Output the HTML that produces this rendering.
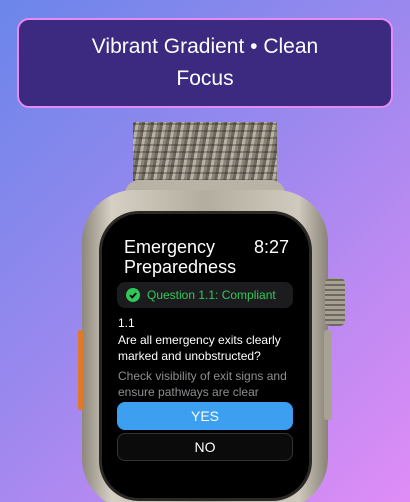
<!DOCTYPE html><html><head><style>
*{margin:0;padding:0;box-sizing:border-box}
html,body{width:410px;height:502px;overflow:hidden}
body{position:relative;font-family:"Liberation Sans",sans-serif;background:linear-gradient(135deg,#6b86ea 0%,#9a88ee 45%,#e08cf6 100%)}
.hdr{position:absolute;left:17px;top:18px;width:376px;height:90px;background:#3b2a80;border:2px solid #e58cf2;border-radius:12px;color:#fff;font-size:21px;text-align:center;line-height:32px;padding-top:11px}
.band{position:absolute;left:133px;top:122px;width:144px;height:80px;background:repeating-linear-gradient(100deg,#6d665c 0 3px,#b8b1a4 3px 6px,#8a8377 6px 9px);border-radius:2px}
.band:after{content:"";position:absolute;inset:0;background:repeating-linear-gradient(0deg,rgba(0,0,0,.25) 0 2px,transparent 2px 7px)}
.case{position:absolute;left:82px;top:190px;width:246px;height:320px;border-radius:52px;background:linear-gradient(90deg,#8d877c,#d6d0c4 12%,#b3ad9f 50%,#d0cabe 88%,#8a8478)}
.lug{position:absolute;top:180px;width:160px;height:30px;left:125px;background:#b9b3a6;border-radius:14px 14px 0 0}
.crown{position:absolute;left:325px;top:278px;width:20px;height:48px;border-radius:5px;background:repeating-linear-gradient(0deg,#6e685f 0 2px,#a7a194 2px 5px)}
.btn2{position:absolute;left:324px;top:330px;width:8px;height:90px;background:#a8a295;border-radius:3px}
.orange{position:absolute;left:78px;top:330px;width:5px;height:80px;background:#e07a2a;border-radius:2px}
.screen{position:absolute;left:99px;top:211px;width:213px;height:290px;border-radius:40px;background:#000;border:3px solid #2a2926}
.t{position:absolute;color:#fff;white-space:nowrap}
</style></head><body>
<div class="hdr">Vibrant Gradient • Clean<br>Focus</div>
<div class="band"></div>
<div class="lug"></div>
<div class="case"></div>
<div class="orange"></div>
<div class="crown"></div>
<div class="btn2"></div>
<div class="screen"></div>
<div class="t" style="left:124px;top:237px;font-size:18px;line-height:20px">Emergency<br>Preparedness</div>
<div class="t" style="left:254px;top:237px;font-size:18px;line-height:20px">8:27</div>
<div style="position:absolute;left:117px;top:282px;width:176px;height:26px;background:#1c1c1e;border-radius:8px"></div>
<div style="position:absolute;left:126px;top:288px;width:14px;height:14px;border-radius:50%;background:#30c85a"></div>
<svg style="position:absolute;left:126px;top:288px" width="14" height="14"><path d="M4 7.2l2.2 2.2 4-4.4" stroke="#000" stroke-width="1.8" fill="none"/></svg>
<div class="t" style="left:147px;top:288px;font-size:12px;color:#34c759">Question 1.1: Compliant</div>
<div class="t" style="left:118px;top:316px;font-size:12px">1.1</div>
<div class="t" style="left:118px;top:332px;font-size:12px;line-height:16px">Are all emergency exits clearly<br>marked and unobstructed?</div>
<div class="t" style="left:118px;top:368px;font-size:12px;line-height:16px;color:#8e8e93">Check visibility of exit signs and<br>ensure pathways are clear</div>
<div class="t" style="left:117px;top:402px;width:176px;height:28px;background:#3d9ff0;border-radius:8px;text-align:center;line-height:28px;font-size:14px">YES</div>
<div class="t" style="left:117px;top:433px;width:176px;height:28px;background:#0b0b0b;border:1px solid #333;border-radius:8px;text-align:center;line-height:27px;font-size:14px">NO</div>
</body></html>
